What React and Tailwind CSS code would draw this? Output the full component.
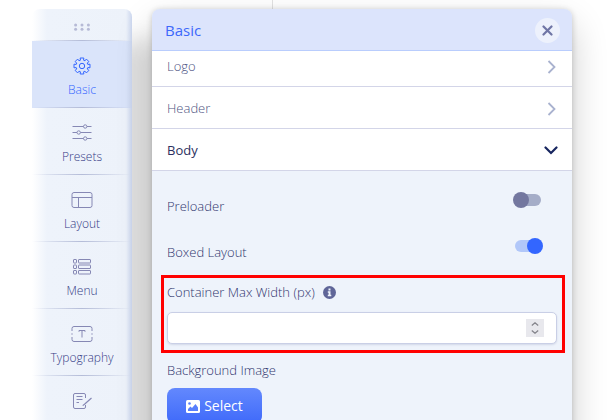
import { useState } from "react";

const svgProps = {
  fill: "none",
  stroke: "currentColor",
  strokeWidth: 1,
  "aria-hidden": true
};

// outline of an eight-toothed gear around (9, 9)
const gearPoints = Array.from({ length: 8 }, (_, i) => i * 45)
  .flatMap(a => [
    [a - 15, 6],
    [a - 13, 8.2],
    [a + 13, 8.2],
    [a + 15, 6]
  ])
  .map(([deg, r]) => {
    const rad = (deg * Math.PI) / 180;
    return `${(9 + r * Math.sin(rad)).toFixed(2)},${(9 - r * Math.cos(rad)).toFixed(2)}`;
  })
  .join(" ");

function GearIcon() {
  return (
    <svg width="18" height="18" viewBox="0 0 18 18" {...svgProps} strokeLinejoin="round">
      <polygon points={gearPoints} />
      <circle cx="9" cy="9" r="2.7" />
    </svg>
  );
}

function SlidersIcon() {
  return (
    <svg width="20" height="18" viewBox="0 0 20 18" {...svgProps}>
      <path d="M.5 2.5h11M15 2.5h4.5M.5 8.5h4.5M8.5 8.5h11M.5 14.5h11M15 14.5h4.5" />
      <circle cx="13.2" cy="2.5" r="1.7" />
      <circle cx="6.7" cy="8.5" r="1.7" />
      <circle cx="13.2" cy="14.5" r="1.7" />
    </svg>
  );
}

function LayoutIcon() {
  return (
    <svg width="22" height="18" viewBox="0 0 22 18" {...svgProps}>
      <rect x="1" y="1.5" width="20" height="15" rx="2" />
      <path d="M1 6.5h20M7.5 6.5v10" />
    </svg>
  );
}

function MenuIcon() {
  return (
    <svg width="20" height="18" viewBox="0 0 20 18" {...svgProps}>
      <rect x="1.5" y="1.5" width="3" height="3.5" rx=".5" />
      <rect x="6.5" y="1.5" width="12" height="3.5" rx=".5" />
      <rect x="1.5" y="7" width="3" height="3.5" rx=".5" />
      <rect x="6.5" y="7" width="12" height="3.5" rx=".5" />
      <rect x="1.5" y="12.5" width="3" height="3.5" rx=".5" />
      <rect x="6.5" y="12.5" width="12" height="3.5" rx=".5" />
    </svg>
  );
}

function TypographyIcon() {
  return (
    <svg width="22" height="18" viewBox="0 0 22 18" {...svgProps}>
      <path d="M1 6V3.5a2 2 0 0 1 2-2h16a2 2 0 0 1 2 2V6M1 12v2.5a2 2 0 0 0 2 2h16a2 2 0 0 0 2-2V12M1 8.3v1.4M21 8.3v1.4" />
      <path d="M8 6.8V5.5h6v1.3M11 5.5v7" />
    </svg>
  );
}

function NoteIcon() {
  return (
    <svg width="20" height="18" viewBox="0 0 20 18" {...svgProps}>
      <path d="M13.5 6V3A1.5 1.5 0 0 0 12 1.5H3A1.5 1.5 0 0 0 1.5 3v12A1.5 1.5 0 0 0 3 16.5h9a1.5 1.5 0 0 0 1.5-1.5v-2" />
      <path d="M4.5 4.5h6M4.5 7.5h6M4.5 10.5h2.5" />
      <path d="m19.5 6-7 6.2-1.8 1.4" strokeWidth="1.2" />
    </svg>
  );
}

const navItems = [
  { id: "basic", label: "Basic", icon: GearIcon },
  { id: "presets", label: "Presets", icon: SlidersIcon },
  { id: "layout", label: "Layout", icon: LayoutIcon },
  { id: "menu", label: "Menu", icon: MenuIcon },
  { id: "typography", label: "Typography", icon: TypographyIcon },
  { id: "custom", label: "", icon: NoteIcon }
];

function Sidebar() {
  const [active, setActive] = useState("basic");

  return (
    <nav className="relative z-10 w-[100px] shrink-0 overflow-hidden rounded-t-lg bg-linear-to-r from-white via-[#eef3fb] via-15% to-[#edf2fa] shadow-[28px_32px_24px_rgba(0,0,0,0.12)]">
      <div className="flex h-8 items-center justify-center pt-1 text-[#b6bad6]">
        <svg width="16" height="8" viewBox="0 0 16 8" fill="currentColor" aria-hidden="true">
          <circle cx="1.6" cy="2" r="1.5" />
          <circle cx="8" cy="2" r="1.5" />
          <circle cx="14.4" cy="2" r="1.5" />
          <circle cx="1.6" cy="6.2" r="1.5" />
          <circle cx="8" cy="6.2" r="1.5" />
          <circle cx="14.4" cy="6.2" r="1.5" />
        </svg>
      </div>

      {navItems.map(({ id, label, icon: Icon }) => (
        <div key={id}>
          <div className="-mt-px h-px bg-linear-to-r from-transparent via-[#b4bcd8] to-transparent" />
          <button
            onClick={() => setActive(id)}
            className={`flex h-[67px] w-full flex-col items-center gap-[7px] pt-4 text-xs ${
              active === id ? "bg-[#dae4fa] text-[#3366ff]" : "text-[#363b86]"
            }`}
          >
            <span className={active === id ? "" : "text-[#8688b4]"}>
              <Icon />
            </span>
            {label}
          </button>
        </div>
      ))}

      {/* soft right edge */}
      <div className="pointer-events-none absolute inset-y-0 right-0 w-1.5 bg-linear-to-r from-transparent to-[#ccd7ef]" />
    </nav>
  );
}

function Chevron({ open }) {
  return open ? (
    <svg width="14" height="9" viewBox="0 0 14 9" fill="none" stroke="#17255f" strokeWidth="2.2" strokeLinecap="round" aria-hidden="true">
      <path d="M1.5 1.5 7 7l5.5-5.500" />
    </svg>
  ) : (
    <svg width="14" height="14" viewBox="0 0 14 14" fill="none" stroke="#a9b2cf" strokeWidth="1.8" aria-hidden="true">
      <path d="M4.5 1 10.5 7l-6 6" />
    </svg>
  );
}

function Switch({ label, checked, onChange }) {
  return (
    <label className="flex h-[46px] items-center justify-between pt-0.5 pr-4 pl-1.5">
      {label}
      <input
        type="checkbox"
        checked={checked}
        onChange={e => onChange(e.target.checked)}
        className="relative mr-2 mb-3.5 h-3 w-[26px] appearance-none rounded-full bg-[#a5adc8] before:absolute before:-top-0.5 before:-left-0.5 before:size-4 before:rounded-full before:bg-[#73779f] checked:bg-[#b1c7f9] checked:before:left-3 checked:before:bg-[#3366ff]"
      />
    </label>
  );
}

function App() {
  const [preloader, setPreloader] = useState(false);
  const [boxed, setBoxed] = useState(true);

  return (
    <div className="relative flex h-screen gap-5 overflow-hidden bg-white pt-[9px] pr-[37px] pl-8 font-['Open_Sans',sans-serif] font-light">
      <div className="absolute inset-y-0 right-0 left-[272px] border-l border-[#e2e2e2] bg-white" />

      <Sidebar />

      <section className="relative z-10 h-[480px] min-w-0 flex-1 rounded-t-lg bg-[#eef3fb] text-[13px] text-[#30356e] shadow-[0_16px_36px_rgba(0,0,0,0.2),0_1px_6px_rgba(0,0,0,0.2)]">
        <header className="flex h-[42px] items-center justify-between rounded-t-lg border-b border-[#b9cdfd] bg-[#dce4fc] pt-px pr-3 pl-[13px]">
          <h2 className="text-[15px] font-normal text-[#3d68fb]">Basic</h2>
          <button aria-label="Close" className="flex size-[25px] items-center justify-center rounded-full bg-[#edf1fc]">
            <svg width="11" height="11" viewBox="0 0 11 11" stroke="#6f75a5" strokeWidth="2.2" strokeLinecap="round" aria-hidden="true">
              <path d="m1.5 1.5 8 8M9.5 1.5l-8 8" />
            </svg>
          </button>
        </header>

        <button className="flex h-9 w-full items-center justify-between border-b border-[#d3d5e8] bg-white pr-3.5 pb-1 pl-[15px] text-[#4d5382]">
          Logo
          <Chevron />
        </button>
        <button className="flex h-[42px] w-full items-center justify-between border-b border-[#d3d5e8] bg-white pt-0.5 pr-3.5 pl-[15px] text-[#4d5382]">
          Header
          <Chevron />
        </button>
        <button className="flex h-[42px] w-full items-center justify-between border-b border-[#d3d5e8] bg-white pt-0.5 pr-3.5 pl-[15px] font-normal text-[#2c3160]">
          Body
          <Chevron open />
        </button>

        <div className="pt-3 pr-[7px] pl-[9px]">
          <Switch label="Preloader" checked={preloader} onChange={setPreloader} />
          <Switch label="Boxed Layout" checked={boxed} onChange={setBoxed} />

          <div className="border-3 border-[#ff0000] pt-1 pr-[5px] pb-1.5 pl-[3px]">
            <div className="flex items-center gap-2">
              <label htmlFor="max-width" className="leading-5">
                Container Max Width (px)
              </label>
              <svg width="13" height="13" viewBox="0 0 13 13" aria-hidden="true">
                <circle cx="6.5" cy="6.5" r="6.5" fill="#5f6598" />
                <path d="M5.5 2.5h2v2h-2zM4.8 5.3h2.7v3.5h.8v1.4H4.8V8.8h.8V6.7h-.8z" fill="#eef3fb" />
              </svg>
            </div>
            <div className="relative mt-2.5">
              <input
                id="max-width"
                type="text"
                inputMode="numeric"
                className="block h-8 w-full rounded-[5px] border border-[#c9cfe6] bg-white px-3 shadow-[0_1px_2px_rgba(60,70,130,0.15)]"
              />
              <div className="absolute top-[7px] right-[13px] flex h-[18px] w-[18px] flex-col items-center justify-between bg-[#e8e8ed] py-[3px]">
                <svg width="8" height="4" viewBox="0 0 8 4" fill="none" stroke="#85858c" strokeWidth="1.3" aria-hidden="true">
                  <path d="M.8 3.5 4 .8l3.2 2.7" />
                </svg>
                <svg width="8" height="4" viewBox="0 0 8 4" fill="none" stroke="#85858c" strokeWidth="1.3" aria-hidden="true">
                  <path d="M.8.5 4 3.2 7.2.5" />
                </svg>
              </div>
            </div>
          </div>

          <div className="pt-[7px] pl-1.5">
            <p className="leading-5">Background Image</p>
            <button className="mt-2 flex h-9 w-[95px] items-center justify-center gap-1 rounded-lg bg-linear-to-b from-[#6388fd] to-[#3f69fa] text-sm font-normal text-white">
              <svg width="14" height="13" viewBox="0 0 14 13" aria-hidden="true">
                <rect width="14" height="13" rx="1.5" fill="#fff" />
                <circle cx="3.5" cy="3.5" r="1.3" fill="#587ffc" />
                <path d="M2 11V9l2.5-2.5L6 8l3.5-4L12 7.5V11z" fill="#587ffc" />
              </svg>
              Select
            </button>
          </div>
        </div>
      </section>
    </div>
  );
}

export default App;
